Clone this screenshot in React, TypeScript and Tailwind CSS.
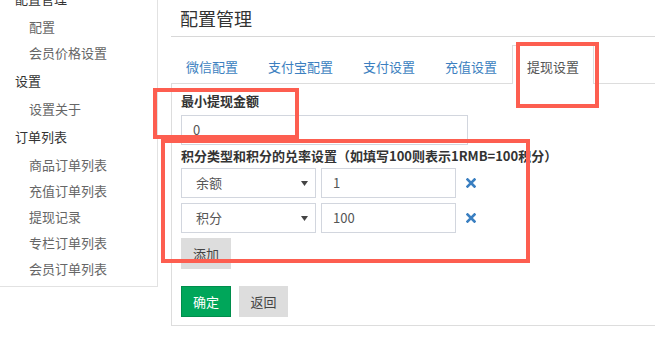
import React from "react";

const font = { fontFamily: '"Noto Sans CJK SC", "Noto Sans", sans-serif' };

function SideHeader({ children }: { children: React.ReactNode }) {
  return <div className="h-[30px] leading-[30px] pl-[15px] text-[13px] text-[#333]">{children}</div>;
}
function SideItem({ children }: { children: React.ReactNode }) {
  return <div className="h-[26px] leading-[26px] pl-[29px] text-[13px] text-[#666]">{children}</div>;
}

function XIcon() {
  return (
    <svg width="10" height="10" viewBox="0 0 10 10" className="ml-[5px] shrink-0">
      <path d="M1.5 1.5 L8.5 8.5 M8.5 1.5 L1.5 8.5" stroke="#3a7fc1" strokeWidth="2.6" strokeLinecap="square" />
    </svg>
  );
}

function SelectBox({ value }: { value: string }) {
  return (
    <div className="w-[135px] h-[30px] border border-[#d2d6de] flex items-center justify-between pl-[14px] pr-[7px] text-[13px] text-[#555]">
      <span>{value}</span>
      <svg width="7" height="5" viewBox="0 0 7 5">
        <path d="M0 0 L7 0 L3.5 5 Z" fill="#444" />
      </svg>
    </div>
  );
}

function InputBox({ value, w }: { value: string; w: string }) {
  return (
    <div className={`${w} h-[30px] border border-[#d2d6de] flex items-center pl-[11px] text-[13px] text-[#555]`}>
      {value}
    </div>
  );
}

export default function App() {
  const tabs = ["微信配置", "支付宝配置", "支付设置", "充值设置"];
  return (
    <div className="relative w-[655px] h-[339px] overflow-hidden bg-white flex items-start" style={font}>
      {/* sidebar */}
      <div className="w-[158px] shrink-0 -mt-[16px] pb-[4px] border-r border-b border-[#e2e2e2]">
        <SideHeader>配置管理</SideHeader>
        <SideItem>配置</SideItem>
        <SideItem>会员价格设置</SideItem>
        <SideHeader>设置</SideHeader>
        <SideItem>设置关于</SideItem>
        <SideHeader>订单列表</SideHeader>
        <SideItem>商品订单列表</SideItem>
        <SideItem>充值订单列表</SideItem>
        <SideItem>提现记录</SideItem>
        <SideItem>专栏订单列表</SideItem>
        <SideItem>会员订单列表</SideItem>
      </div>

      {/* main */}
      <div className="ml-[13px] flex-1 flex flex-col">
        <div className="h-[37px] border-b border-[#d8d8d8] pl-[9px] text-[18px] leading-[36px] text-[#333]">
          配置管理
        </div>
        <div className="mt-[8px] flex border-b border-[#ddd] h-[39px]">
          {tabs.map((t) => (
            <div key={t} className="px-[15px] pt-[12px] leading-[20px] text-[13px] text-[#3c7fc0]">
              {t}
            </div>
          ))}
          <div className="px-[14px] pt-[11px] leading-[20px] text-[13px] text-[#555] bg-white border-l border-t border-r border-[#ddd] h-[39px]">
            提现设置
          </div>
        </div>
        <div className="border-l border-b border-[#ddd] pl-[9px] pt-[7px] pb-[8px] flex flex-col items-start">
          <div className="h-[20px] leading-[20px] text-[13px] font-bold text-[#333]">最小提现金额</div>
          <div className="mt-[4px]">
            <InputBox value="0" w="w-[287px]" />
          </div>
          <div className="mt-[1px] h-[20px] leading-[20px] text-[13px] font-bold text-[#333] whitespace-nowrap">
            积分类型和积分的兑率设置（如填写100则表示1RMB=100积分）
          </div>
          <div className="mt-[2px] flex items-center gap-[5px]">
            <SelectBox value="余额" />
            <InputBox value="1" w="w-[135px]" />
            <XIcon />
          </div>
          <div className="mt-[5px] flex items-center gap-[5px]">
            <SelectBox value="积分" />
            <InputBox value="100" w="w-[135px]" />
            <XIcon />
          </div>
          <div className="mt-[5px] w-[50px] h-[31px] bg-[#dddddd] text-[13px] text-[#444] flex items-center justify-center">
            添加
          </div>
          <div className="mt-[17px] flex gap-[8px]">
            <div className="w-[50px] h-[31px] bg-[#00a65a] border border-[#008d4c] text-[13px] text-white flex items-center justify-center">
              确定
            </div>
            <div className="w-[49px] h-[31px] bg-[#dddddd] text-[13px] text-[#444] flex items-center justify-center">
              返回
            </div>
          </div>
        </div>
      </div>

      {/* red annotation boxes */}
      <div className="absolute left-[516px] top-[42px] w-[83px] h-[66px] border-[4px] border-[#fd5e50]" />
      <div className="absolute left-[153px] top-[88px] w-[146px] h-[51px] border-[4px] border-[#fd5e50]" />
      <div className="absolute left-[161px] top-[139px] w-[369px] h-[124px] border-[4px] border-[#fd5e50]" />
    </div>
  );
}
